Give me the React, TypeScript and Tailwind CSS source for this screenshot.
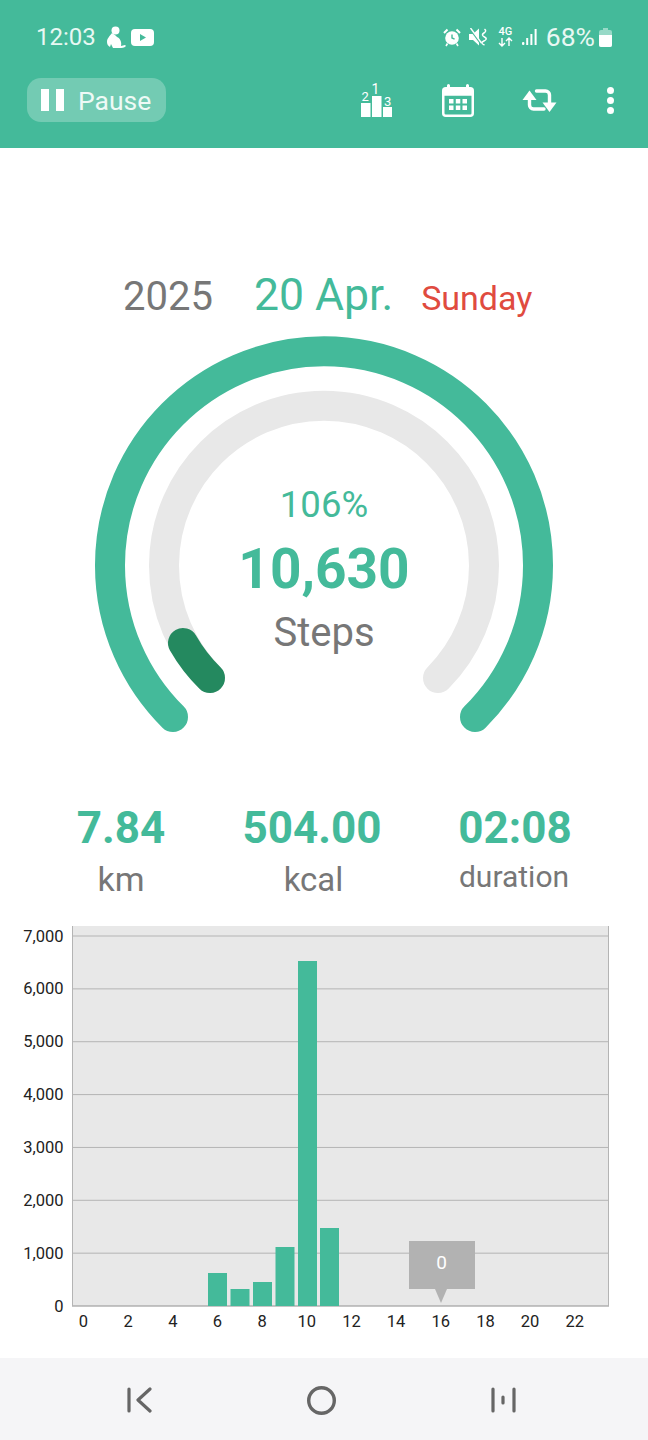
const hours = [0, 2, 4, 6, 8, 10, 12, 14, 16, 18, 20, 22];
const ticks = [7000, 6000, 5000, 4000, 3000, 2000, 1000, 0];
const bars = [
  { x: 208, top: 1273 },
  { x: 230.5, top: 1289 },
  { x: 253, top: 1282 },
  { x: 275.5, top: 1247 },
  { x: 298, top: 961 },
  { x: 320, top: 1228 },
];

function StatusIcons() {
  return (
    <div className="flex items-center">
      <svg width="18" height="19" viewBox="0 0 18 19" className="mr-[8px]" fill="none">
        <circle cx="9" cy="10" r="6.8" fill="#fff" />
        <path d="M9 6.5V10l2.6 1.2" stroke="#44BA9A" strokeWidth="1.4" />
        <path d="M1 5l3.5-3.5M17 5l-3.5-3.5" stroke="#fff" strokeWidth="2" />
        <path d="M4.5 15.5L3 18M13.5 15.5L15 18" stroke="#fff" strokeWidth="1.6" />
      </svg>
      <svg width="19" height="18" viewBox="0 0 19 18" className="mr-[10px]" fill="none">
        <path d="M0 6h4l6-5.5v17L4 12H0z" fill="#fff" />
        <path d="M1 1l11 15" stroke="#44BA9A" strokeWidth="1.6" />
        <path d="M1.5 0l11 15" stroke="#fff" strokeWidth="1.4" />
        <path d="M15.5 1q2.6 2-.6 4t.6 4-.6 4 .6 4" stroke="#fff" strokeWidth="1.5" />
      </svg>
      <div className="w-[15px] h-[20px] mr-[9px] flex flex-col items-center">
        <span className="block text-[11px] leading-[10px] font-medium text-white">4G</span>
        <svg width="15" height="10" viewBox="0 0 15 10" fill="none">
          <path d="M4 1v8M1 6l3 3 3-3M11 9V1M8 4l3-3 3 3" stroke="#fff" strokeWidth="1.4" />
        </svg>
      </div>
      <svg width="15" height="17" viewBox="0 0 15 17" className="mr-[9px]">
        <rect x="0" y="13" width="2.4" height="3" rx="1" fill="#fff" />
        <rect x="4.2" y="9" width="2" height="7" fill="#fff" />
        <rect x="8.4" y="5" width="2" height="11" fill="#fff" />
        <rect x="12.6" y="0" width="2" height="16" fill="#fff" />
      </svg>
      <span className="text-[26.5px] leading-none text-[#e8f8f3]">68%</span>
      <svg width="13" height="19" viewBox="0 0 13 19" className="ml-[4px]">
        <path d="M4 0h5v2h2a2 2 0 0 1 2 2v13a2 2 0 0 1-2 2H2a2 2 0 0 1-2-2V4a2 2 0 0 1 2-2h2z" fill="#fff" fillOpacity="0.45" />
        <path d="M0 7h13v10a2 2 0 0 1-2 2H2a2 2 0 0 1-2-2z" fill="#fff" />
      </svg>
    </div>
  );
}

function ToolbarIcons() {
  return (
    <div className="flex items-center">
      <svg width="31" height="34" viewBox="0 0 31 34" className="mr-[50px] overflow-visible" fill="#fff">
        <rect x="0" y="20" width="9.5" height="14" />
        <rect x="11" y="13" width="9.5" height="21" />
        <rect x="22" y="24" width="9" height="10" />
        <text x="0.5" y="18" fontSize="13" fontFamily="Roboto, sans-serif">2</text>
        <text x="10.5" y="11" fontSize="14" fontFamily="Roboto, sans-serif">1</text>
        <text x="23" y="23" fontSize="13" fontFamily="Roboto, sans-serif">3</text>
      </svg>
      <svg width="32" height="33" viewBox="0 0 32 33" className="mr-[47px]" fill="none">
        <rect x="1.25" y="4.25" width="29.5" height="27.5" rx="2.5" stroke="#fff" strokeWidth="2.5" />
        <rect x="1.25" y="4.25" width="29.5" height="7.5" fill="#fff" />
        <path d="M6.5 1.5v5M25.5 1.5v5" stroke="#fff" strokeWidth="3" strokeLinecap="round" />
        <path d="M7 15h4.5v4.5H7zM13.8 15h4.5v4.5h-4.5zM20.5 15H25v4.5h-4.5zM7 21.5h4.5V26H7zM13.8 21.5h4.5V26h-4.5zM20.5 21.5H25V26h-4.5z" fill="#fff" />
      </svg>
      <svg width="37" height="24" viewBox="0 0 37 24" className="mr-[49px]" fill="none">
        <path d="M8.5 11v6a4 4 0 0 0 4 4H23" stroke="#fff" strokeWidth="3.4" strokeLinecap="round" />
        <path d="M15.5 3h9a4 4 0 0 1 4 4v8" stroke="#fff" strokeWidth="3.4" strokeLinecap="round" />
        <path d="M8.5 2.5L15.5 12h-14z" fill="#fff" />
        <path d="M28.5 24L21.5 14.5h14z" fill="#fff" />
      </svg>
      <div className="flex flex-col gap-[3px]">
        <span className="w-[7px] h-[7px] rounded-full bg-white" />
        <span className="w-[7px] h-[7px] rounded-full bg-white" />
        <span className="w-[7px] h-[7px] rounded-full bg-white" />
      </div>
    </div>
  );
}

function Gauge() {
  return (
    <div className="relative w-[648px] h-[420px]">
      <svg width="648" height="420" viewBox="0 0 648 420" className="absolute inset-0" fill="none" strokeLinecap="round">
        {/* centre of both arcs is 324,246 */}
        <path d="M173 397 A214 214 0 1 1 475 397" stroke="#44BA9A" strokeWidth="30" />
        <path d="M210 358 A160 160 0 1 1 438 358" stroke="#E8E8E8" strokeWidth="30" />
        <path d="M210 358 A160 160 0 0 1 183 323" stroke="#24895F" strokeWidth="30" />
      </svg>
      <div className="absolute inset-x-0 top-[153px] flex flex-col items-center">
        <span className="text-[36.5px] leading-[64px] text-[#44BA9A]">106%</span>
        <span className="text-[55px] leading-[64px] font-bold text-[#44BA9A]">10,630</span>
        <span className="text-[40px] leading-[64px] text-[#777777]">Steps</span>
      </div>
    </div>
  );
}

function Chart() {
  return (
    <svg width="648" height="420" viewBox="0 916 648 420" className="block">
      <rect x="72" y="926" width="537" height="380" fill="#E8E8E8" />
      {ticks.map((t, i) => {
        const y = 936 + i * 52.86;
        return (
          <g key={t}>
            <line x1="72" x2="609" y1={y} y2={y} stroke={t === 0 ? '#8f8f8f' : '#b4b4b4'} strokeWidth="1" />
            <text x="63.5" y={y + 5.5} textAnchor="end" fontSize="16.5" fill="#222" fontFamily="Roboto, sans-serif">
              {t.toLocaleString('en-US')}
            </text>
          </g>
        );
      })}
      <line x1="72.5" x2="72.5" y1="926" y2="1306" stroke="#b4b4b4" />
      <line x1="608.5" x2="608.5" y1="926" y2="1306" stroke="#b4b4b4" />
      {bars.map((b) => (
        <rect key={b.x} x={b.x} y={b.top} width="19" height={1306 - b.top} fill="#44BA9A" />
      ))}
      {hours.map((h, i) => (
        <text key={h} x={83.5 + i * 44.66} y="1327" textAnchor="middle" fontSize="16.5" fill="#222" fontFamily="Roboto, sans-serif">
          {h}
        </text>
      ))}
      <rect x="409" y="1241" width="66" height="48" fill="#B2B2B2" />
      <path d="M435 1289h12l-6 14z" fill="#B2B2B2" />
      <text x="441.5" y="1269" textAnchor="middle" fontSize="19" fill="#fff" fontFamily="Roboto, sans-serif">0</text>
    </svg>
  );
}

export default function App() {
  return (
    <div className="w-[648px] h-[1440px] bg-white overflow-hidden flex flex-col font-['Roboto',sans-serif]">
      <header className="h-[148px] bg-[#44BA9A] px-[27px] pt-[20px]">
        <div className="flex items-center justify-between h-[34px] pl-[9px] pr-[9px]">
          <div className="flex items-center">
            <span className="text-[24px] leading-none text-[#e8f8f3]">12:03</span>
            <svg width="21" height="22" viewBox="0 0 21 22" className="ml-[10px]" fill="#fff">
              <circle cx="9.5" cy="4.5" r="4" />
              <path d="M6 7c-2 3-5 5-5 9 0 2 1 4 3 5l1-3 2 4h6c3 0 5 0 7-2l-1-1-4 1c1-4-1-8-4-9-1-1-3-3-5-4z" />
            </svg>
            <svg width="23" height="17" viewBox="0 0 23 17" className="ml-[4px]">
              <rect width="23" height="17" rx="4" fill="#fff" />
              <path d="M9 5l6 3.5L9 12z" fill="#44BA9A" />
            </svg>
          </div>
          <StatusIcons />
        </div>
        <div className="flex items-center justify-between mt-[24px] pr-[7px]">
          <div className="flex items-center w-[139px] h-[44px] rounded-[14px] bg-white/25 pl-[14px]">
            <span className="flex gap-[7px]">
              <span className="w-[8px] h-[22px] bg-white" />
              <span className="w-[8px] h-[22px] bg-white" />
            </span>
            <span className="ml-[14px] mt-[2px] text-[26.5px] leading-none text-[#eefaf6]">Pause</span>
          </div>
          <ToolbarIcons />
        </div>
      </header>

      <div className="flex items-baseline h-[52px] mt-[121px] pl-[123px]">
        <span className="text-[40px] leading-[52px] text-[#777777]">2025</span>
        <span className="ml-[41px] text-[44.5px] leading-[52px] text-[#44BA9A]">20 Apr.</span>
        <span className="ml-[28px] text-[34px] leading-[52px] text-[#E04B3F]">Sunday</span>
      </div>

      <div className="mt-[-1px]">
        <Gauge />
      </div>

      <div className="flex mt-[63px] pl-[17px] pr-[17px] h-[113px]">
        <div className="w-[208px] flex flex-col items-center">
          <span className="text-[44px] leading-[50px] font-bold text-[#44BA9A]">7.84</span>
          <span className="mt-[3px] text-[34px] leading-[46px] text-[#777777]">km</span>
        </div>
        <div className="w-[174px] flex flex-col items-center">
          <span className="text-[44px] leading-[50px] font-bold text-[#44BA9A]">504.00</span>
          <span className="mt-[4px] ml-[3px] text-[33px] leading-[46px] text-[#777777]">kcal</span>
        </div>
        <div className="flex-1 flex flex-col items-center">
          <span className="text-[44px] leading-[50px] font-bold text-[#44BA9A]">02:08</span>
          <span className="mt-[4px] mr-[2px] text-[30px] leading-[40px] text-[#777777]">duration</span>
        </div>
      </div>

      <Chart />

      <nav className="mt-[22px] h-[82px] bg-[#F5F5F7] pt-[2px] pr-[6px] flex items-center justify-center gap-[155px]">
        <svg width="25" height="26" viewBox="0 0 25 26" fill="none" stroke="#666" strokeWidth="3.2" strokeLinecap="round" strokeLinejoin="round">
          <path d="M2 2v22M23 2L11 13l12 11" />
        </svg>
        <svg width="29" height="29" viewBox="0 0 29 29" fill="none" stroke="#666" strokeWidth="3.4">
          <circle cx="14.5" cy="14.5" r="12.8" />
        </svg>
        <svg width="25" height="26" viewBox="0 0 25 26" fill="none" stroke="#666" strokeWidth="3.2" strokeLinecap="round">
          <path d="M2 2v22M23 2v22M12 10v6" />
        </svg>
      </nav>
    </div>
  );
}
